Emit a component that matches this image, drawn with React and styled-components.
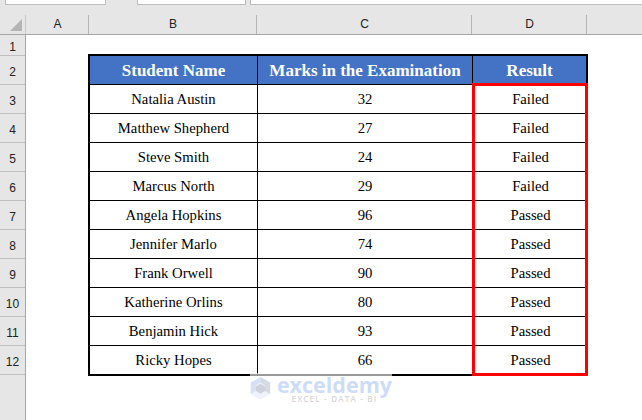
import React from 'react'
import styled, { createGlobalStyle } from 'styled-components'

const students = [
  ['Natalia Austin', 32, 'Failed'],
  ['Matthew Shepherd', 27, 'Failed'],
  ['Steve Smith', 24, 'Failed'],
  ['Marcus North', 29, 'Failed'],
  ['Angela Hopkins', 96, 'Passed'],
  ['Jennifer Marlo', 74, 'Passed'],
  ['Frank Orwell', 90, 'Passed'],
  ['Katherine Orlins', 80, 'Passed'],
  ['Benjamin Hick', 93, 'Passed'],
  ['Ricky Hopes', 66, 'Passed'],
]

const rowHeights = [21, 29, 29, 29, 29, 29, 29, 29, 29, 29, 29, 29]

const App = () => (
  <Page>
    <GlobalStyle />
    <TopStrip>
      <TopBox $width={101} $left={5} />
      <TopBox $width={109} $left={31} />
      <TopBox $left={4} $grow />
    </TopStrip>
    <ColumnBar>
      <Corner>
        <svg width='26' height='20' viewBox='0 0 26 20'>
          <path d='M10 16 L22 16 L22 4 Z' fill='#b4b4b4' />
        </svg>
      </Corner>
      <ColumnHead $width={63}>A</ColumnHead>
      <ColumnHead $width={168}>B</ColumnHead>
      <ColumnHead $width={215}>C</ColumnHead>
      <ColumnHead $width={115}>D</ColumnHead>
      <ColumnRest />
    </ColumnBar>
    <Body>
      <RowBar>
        {rowHeights.map((h, i) => (
          <RowHead key={i} $height={h}>{i + 1}</RowHead>
        ))}
      </RowBar>
      <Sheet>
        <Table>
          <thead>
            <tr>
              <HeadCell $width={167}>Student Name</HeadCell>
              <HeadCell $width={214}>Marks in the Examination</HeadCell>
              <HeadCell $width={113}>Result</HeadCell>
            </tr>
          </thead>
          <tbody>
            {students.map(([name, marks, result]) => (
              <tr key={name}>
                <Cell>{name}</Cell>
                <Cell>{marks}</Cell>
                <Cell $result>{result}</Cell>
              </tr>
            ))}
          </tbody>
        </Table>
        <RedBox />
        <Watermark>
          <svg width='28' height='31' viewBox='0 0 28 31'>
            <path d='M14 0 L1 7.5 L1 23 L14 30.5 L27 23 L27 7.5 Z' fill='#eef2fb' />
            <path d='M14 0 L1 7.5 L1 23 L8 19 L8 11 L14 7.5 Z' fill='#d6e1f7' />
            <path d='M14 0 L27 7.5 L27 23 L20 19 L20 11 L14 7.5 Z' fill='#d5d9e1' />
            <path d='M14 9 L20 12.5 L20 19 L14 22.5 L8 19 L8 12.5 Z' fill='#cdd2dc' />
          </svg>
          <WatermarkText>
            <WatermarkName>exceldemy</WatermarkName>
            <WatermarkTag>EXCEL - DATA - BI</WatermarkTag>
          </WatermarkText>
        </Watermark>
      </Sheet>
    </Body>
  </Page>
)

export default App

const GlobalStyle = createGlobalStyle`
  html, body {
    margin: 0;
    padding: 0;
    background: #fff;
  }
`

const Page = styled.div`
  width: 642px;
  height: 420px;
  display: flex;
  flex-flow: column;
  overflow: hidden;
  font-family: "Liberation Sans", sans-serif;
`

const TopStrip = styled.div`
  height: 15px;
  display: flex;
  align-items: flex-start;
  background: #e6e6e6;
  flex: none;
`

const TopBox = styled.div`
  height: 4px;
  background: #fff;
  border: 1px solid #bdbdbd;
  border-top: 0;
  margin-left: ${p => p.$left}px;
  ${p => p.$grow ? 'flex: 1; border-right: 0;' : `width: ${p.$width - 2}px;`}
`

const ColumnBar = styled.div`
  height: 20px;
  display: flex;
  flex: none;
  box-sizing: border-box;
  background: #e6e6e6;
  border-bottom: 1px solid #a6a6a6;
`

const Corner = styled.div`
  width: 26px;
  height: 19px;
  border-right: 1px solid #c8c8c8;
  box-sizing: border-box;
`

const ColumnHead = styled.div`
  width: ${p => p.$width}px;
  box-sizing: border-box;
  border-right: 1px solid #b4b4b4;
  padding-left: 1px;
  font-size: 12px;
  line-height: 19px;
  text-align: center;
  color: #222;
`

const ColumnRest = styled.div`
  flex: 1;
`

const Body = styled.div`
  flex: 1;
  display: flex;
  min-height: 0;
`

const RowBar = styled.div`
  width: 26px;
  flex: none;
  box-sizing: border-box;
  background: #e6e6e6;
  border-right: 1px solid #a6a6a6;
`

const RowHead = styled.div`
  height: ${p => p.$height}px;
  box-sizing: border-box;
  border-bottom: 1px solid #c0c0c0;
  font-size: 12px;
  line-height: ${p => p.$height + 3}px;
  text-align: center;
  color: #222;
`

const Sheet = styled.div`
  flex: 1;
  position: relative;
  padding: 19px 0 0 62px;
`

const Table = styled.table`
  border-collapse: collapse;
  table-layout: fixed;
  width: 499px;
  border: 2px solid #000;
  font-family: "Liberation Serif", serif;
`

const HeadCell = styled.th`
  width: ${p => p.$width}px;
  height: 27px;
  padding: 1px 0 0;
  background: #4472c4;
  color: #fff;
  font-size: 17px;
  font-weight: 700;
  text-align: center;
  border: 1px solid #000;
`

const Cell = styled.td`
  height: 28px;
  padding: 0 0 0 ${p => p.$result ? 2 : 0}px;
  font-size: 14.7px;
  color: #000;
  text-align: center;
  border: 1px solid #000;
`

const RedBox = styled.div`
  position: absolute;
  left: 446px;
  top: 48px;
  width: 116px;
  height: 293px;
  box-sizing: border-box;
  border: 3px solid #f00;
`

const Watermark = styled.div`
  position: absolute;
  left: 224px;
  top: 338px;
  width: 142px;
  height: 46px;
  display: flex;
  gap: 6px;
  align-items: flex-start;
  background: rgba(255, 255, 255, 0.6);
`

const WatermarkText = styled.div`
  display: flex;
  flex-flow: column;
  align-items: center;
  gap: 2px;
  padding-top: 4px;
`

const WatermarkName = styled.div`
  font-family: "Open Sans", sans-serif;
  font-size: 21.5px;
  font-weight: 700;
  line-height: 16px;
  color: #cddcf7;
`

const WatermarkTag = styled.div`
  font-family: "Open Sans", sans-serif;
  font-size: 8px;
  font-weight: 600;
  letter-spacing: 1.2px;
  line-height: 7px;
  color: #d8d8d8;
`
